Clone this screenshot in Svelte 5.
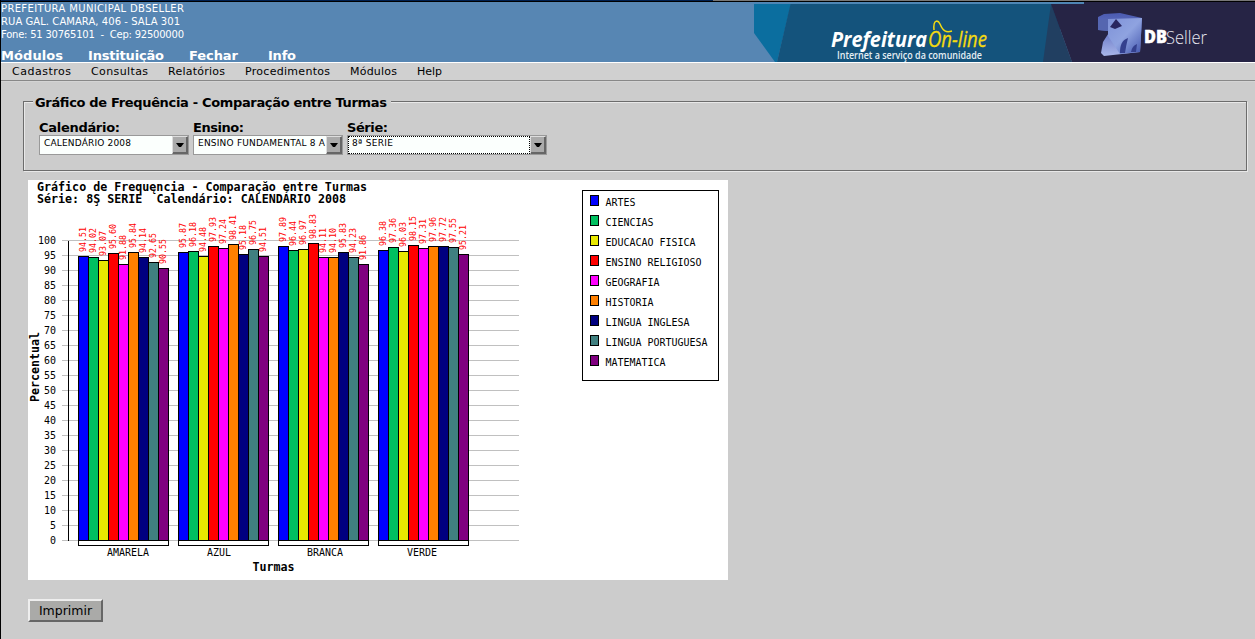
<script>
  const subjects = [
    ['ARTES', '#0000ff'], ['CIENCIAS', '#00c060'], ['EDUCACAO FISICA', '#e8e800'],
    ['ENSINO RELIGIOSO', '#ff0000'], ['GEOGRAFIA', '#ff00ff'], ['HISTORIA', '#ff8000'],
    ['LINGUA INGLESA', '#000080'], ['LINGUA PORTUGUESA', '#408080'], ['MATEMATICA', '#800080']
  ];
  const groups = [
    { name: 'AMARELA', x: 79, values: ['94.51', '94.02', '93.07', '95.60', '91.88', '95.84', '94.14', '92.65', '90.55'] },
    { name: 'AZUL', x: 179, values: ['95.87', '96.18', '94.48', '97.93', '97.24', '98.41', '95.18', '96.75', '94.51'] },
    { name: 'BRANCA', x: 279, values: ['97.89', '96.44', '96.97', '98.83', '94.11', '94.10', '95.83', '94.23', '91.86'] },
    { name: 'VERDE', x: 379, values: ['96.38', '97.36', '96.03', '98.15', '97.31', '97.96', '97.72', '97.55', '95.21'] }
  ];
  const ticks = Array.from({ length: 21 }, (_, i) => i * 5);
  const top = (v) => Math.floor(360 - 3 * Number(v));
  const title = 'Gráfico de Frequęncia - Comparaçăo entre Turmas';
  const subtitle = 'Série: 8Ş SERIE  Calendário: CALENDÁRIO 2008';
  const modules = [['Módulos', 1, 62], ['Instituição', 88, 76], ['Fechar', 189, 49], ['Info', 268, 28]];
  const menu = [['Cadastros', 12, 59], ['Consultas', 91, 57], ['Relatórios', 168, 57], ['Procedimentos', 245, 85], ['Módulos', 350, 47], ['Help', 417, 25]];
  const fields = [
    { label: 'Calendário:', lw: 81, value: 'CALENDÁRIO 2008', vw: 87, w: 150 },
    { label: 'Ensino:', lw: 51, value: 'ENSINO FUNDAMENTAL 8 A', vw: 127, w: 150 },
    { label: 'Série:', lw: 41, value: '8ª SERIE', vw: 41, w: 200, focus: true }
  ];
</script>

<div class="page">
  <div class="strip"></div>
  <header>
    <svg class="head" width="754" height="60" viewBox="0 2 754 60">
      <rect x="0" y="2" width="1" height="60" fill="#000" />
      <g font-size="10">
        <text x="1" y="12" textLength="183">PREFEITURA MUNICIPAL DBSELLER</text>
        <text x="1" y="25" textLength="179">RUA GAL. CAMARA, 406 - SALA 301</text>
        <text x="1" y="38" textLength="183" xml:space="preserve">Fone: 51 30765101  -  Cep: 92500000</text>
      </g>
      <g font-size="13" font-weight="bold">
        {#each modules as [label, x, w]}<text {x} y="60" textLength={w}>{label}</text>{/each}
      </g>
    </svg>
    <svg class="banner" width="501" height="60" viewBox="754 2 501 60">
      <defs>
        <linearGradient id="face" x1="0" y1="0" x2="1" y2="1">
          <stop offset="0" stop-color="#7f92d8" /><stop offset=".5" stop-color="#8fa3e0" /><stop offset="1" stop-color="#4356ae" />
        </linearGradient>
        <linearGradient id="side" x1="0" y1="0" x2="0" y2="1">
          <stop offset="0" stop-color="#4a5ab0" /><stop offset=".4" stop-color="#6676c4" /><stop offset="1" stop-color="#a9b6ea" />
        </linearGradient>
      </defs>
      <rect x="754" y="2" width="330" height="2" fill="#4f86b5" />
      <path d="M754 4H791L777 62H775L754 33Z" fill="#0b6e9f" />
      <path d="M790.5 4H1060V62H777Z" fill="#14537c" />
      <path d="M1051 4L1072 62H1043Z" fill="#213f61" />
      <path d="M1084 2H1255V62H1072L1051 4H1084Z" fill="#262445" />
      <text class="brand" x="831" y="47" font-size="21" textLength="96" lengthAdjust="spacingAndGlyphs">Prefeitura</text>
      <text class="online" x="928" y="47" font-size="22" textLength="59" lengthAdjust="spacingAndGlyphs">On-line</text>
      <path d="M934 30C933 19 938 20 940 24C943 31 946 33 952 31" fill="none" stroke="#f4da10" stroke-width="1.5" />
      <text class="tag" x="837" y="58.5" font-size="10" textLength="145" lengthAdjust="spacingAndGlyphs">Internet a serviço da comunidade</text>
      <path d="M1098 17L1104 14L1120 13L1142 18L1140 52L1104 56L1101 53L1103 42L1110 31L1098 30Z" fill="url(#side)" />
      <path d="M1098 20L1108 19V31L1098 30Z" fill="#5566b0" />
      <path d="M1108 19L1142 18L1140 52L1120 54L1108 36Z" fill="url(#face)" />
      <path d="M1116 19L1122 26L1115 29L1110 27Z" fill="#292660" />
      <path d="M1120 53C1120 45 1122 40 1128 38Q1126 46 1125 53ZM1131 52Q1132 46 1137 44L1136 52Z" fill="#34408e" />
      <text class="db" x="1144" y="43" font-size="17" textLength="23" lengthAdjust="spacingAndGlyphs">DB</text>
      <text class="seller" x="1166" y="43.5" font-size="19" textLength="41" lengthAdjust="spacingAndGlyphs">Seller</text>
    </svg>
  </header>
  <nav>
    <svg width="500" height="17" viewBox="0 63 500 17" font-size="11">
      {#each menu as [label, x, w]}<text {x} y="75" textLength={w}>{label}</text>{/each}
    </svg>
  </nav>
  <main>
    <fieldset>
      <legend><svg width="354" height="16"><text x="0" y="12" font-size="13" font-weight="bold" textLength="352">Gráfico de Frequência - Comparação entre Turmas</text></svg></legend>
      <div class="fields">
        {#each fields as f}
          <div class="field" style="width:{f.w}px">
            <svg width="100" height="15"><text x="0" y="12" font-size="13" font-weight="bold" textLength={f.lw}>{f.label}</text></svg>
            <div class="select">
              <div class="value" class:focus={f.focus}>
                <svg width="133" height="16"><text x={f.focus ? 3 : 4} y="10" font-size="9" textLength={f.vw}>{f.value}</text></svg>
              </div>
              <div class="arrow"><svg width="8" height="4"><path d="M0 0H8L5 4H3Z" /></svg></div>
            </div>
          </div>
        {/each}
      </div>
    </fieldset>

    <svg class="chart" width="700" height="400" viewBox="0 0 700 400">
      <rect width="700" height="400" fill="#fff" />
      <g transform="translate(-28 0)">
        <g font-size="12" font-weight="bold">
          <text x="37" y="11" textLength="330" lengthAdjust="spacingAndGlyphs">{title}</text>
          <text x="37" y="23" textLength="309" lengthAdjust="spacingAndGlyphs" xml:space="preserve">{subtitle}</text>
          <text x="252.5" y="391" textLength="42" lengthAdjust="spacingAndGlyphs">Turmas</text>
          <text transform="translate(39 222) rotate(-90)" textLength="70" lengthAdjust="spacingAndGlyphs">Percentual</text>
        </g>
        {#each ticks as t}
          <rect x="62" y={360 - t * 3} width="457" height="1" fill="#c0c0c0" />
          <text x={56 - String(t).length * 6} y={364 - t * 3} font-size="11" textLength={String(t).length * 6} lengthAdjust="spacingAndGlyphs">{t}</text>
        {/each}
        <rect x="68" y="61" width="1" height="300" />
        {#each groups as g}
          {#each g.values as v, i}
            <rect x={g.x - .5 + i * 10} y={top(v) + .5} width="10" height={360 - top(v)} fill={subjects[i][1]} stroke="#000" />
            <text class="num" transform="translate({g.x + 7 + i * 10} {top(v) - 4}) rotate(-90)" font-size="8.3" textLength="25" lengthAdjust="spacingAndGlyphs">{v}</text>
          {/each}
          <rect x={g.x - .5} y="360.5" width="90" height="5" fill="#fff" stroke="#000" />
          <text x={g.x + 28} y="376" font-size="11" textLength={g.name.length * 6} lengthAdjust="spacingAndGlyphs">{g.name}</text>
        {/each}
        <rect x="582.5" y="10.5" width="136" height="190" fill="#fff" stroke="#000" />
        {#each subjects as [name, color], i}
          <rect x="590.5" y={15.5 + i * 20} width="8" height="10" fill={color} stroke="#000" />
          <text x="605.5" y={26 + i * 20} font-size="11" textLength={name.length * 6} lengthAdjust="spacingAndGlyphs">{name}</text>
        {/each}
      </g>
    </svg>
    <button>Imprimir</button>
  </main>
</div>

<style>
  :global(body) { margin: 0; background: #ccc; }
  .page { box-sizing: border-box; width: 1255px; height: 639px; background: #ccc; border-left: 1px solid #000; overflow: hidden; font-family: "DejaVu Sans", sans-serif; }
  svg { display: block; white-space: pre; }
  .strip { height: 1px; border-bottom: 1px solid #000; background: linear-gradient(90deg, #00204f 712px, #777 712px); }
  header { display: flex; height: 60px; margin-left: -1px; background: #5786b3; }
  .head { flex: none; fill: #fff; }
  .banner { flex: none; }
  .brand { font-family: "Open Sans"; font-weight: 700; font-style: italic; fill: #fff; }
  .online { font-family: "Open Sans"; font-style: italic; fill: #f4da10; stroke: #f4da10; stroke-width: .3; }
  .tag { font-family: "Open Sans"; font-weight: 600; fill: #e4eef4; }
  .db { font-family: "Open Sans"; font-weight: 800; fill: #fff; stroke: #fff; stroke-width: .4; }
  .seller { font-family: "Open Sans"; font-weight: 300; fill: #e8e8f0; }
  nav { height: 17px; background: #d0d0d0; border-top: 1px solid #fff; border-bottom: 1px solid #888; box-shadow: 0 1px #d4d4d4; }
  nav svg { margin-left: -1px; }
  main { padding: 14px 7px 0 22px; }
  fieldset { box-sizing: border-box; width: 1224px; height: 76px; margin: 0; padding: 0 0 0 15px; border: 1px solid #6c6c6c; box-shadow: inset 1px 1px #e8e8e8, 1px 1px #e8e8e8; }
  legend { height: 13px; margin-left: -6px; padding: 0 2px; background: #ccc; }
  .fields { display: flex; gap: 4px; padding-top: 12px; }
  .select { display: flex; box-sizing: border-box; height: 20px; border: 1px solid #999; background: #fbfffd; }
  .value { flex: 1; overflow: hidden; }
  .focus { border: 1px dotted #000; }
  .focus svg { margin-top: -1px; }
  .arrow { display: flex; align-items: center; justify-content: center; box-sizing: border-box; width: 16px; padding-right: 1px; border: 1px solid; border-color: #ddd #666 #666 #ddd; box-shadow: inset -1px -1px #666; background: #aaa; }
  .arrow svg { flex: none; }
  .chart { margin: 9px 0 0 5px; font-family: "DejaVu Sans Mono", monospace; }
  .num { fill: #f00; }
  button { display: block; box-sizing: border-box; width: 75px; height: 23px; margin: 19px 0 0 5px; padding: 0; border: 2px solid; border-color: #eee #666 #666 #eee; background: #aaaaa8; color: #000; font: 12.5px "DejaVu Sans", sans-serif; line-height: 18px; }
</style>
